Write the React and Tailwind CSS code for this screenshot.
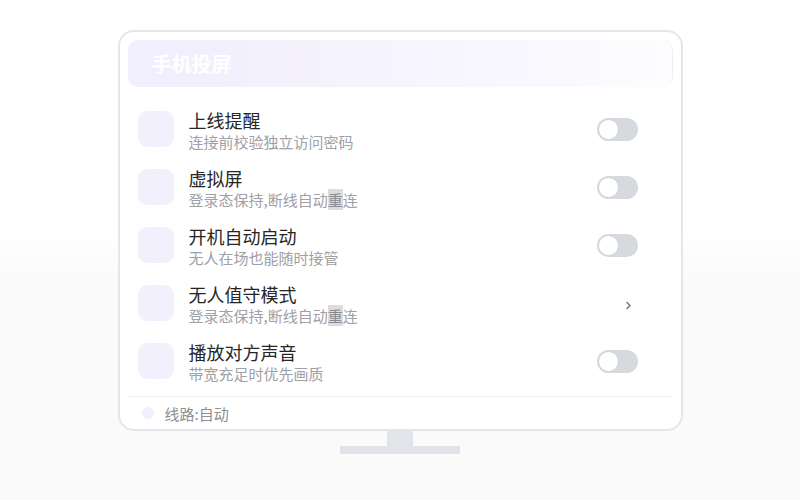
import React from "react";

const rows = [
  { title: "上线提醒", sub: "连接前校验独立访问密码", type: "toggle" },
  { title: "虚拟屏", sub: "登录态保持,断线自动|重|连", type: "toggle" },
  { title: "开机自动启动", sub: "无人在场也能随时接管", type: "toggle" },
  { title: "无人值守模式", sub: "登录态保持,断线自动|重|连", type: "chevron" },
  { title: "播放对方声音", sub: "带宽充足时优先画质", type: "toggle" },
];

function Sub({ text }) {
  const parts = text.split("|");
  if (parts.length === 1) return <>{text}</>;
  return (
    <>
      {parts[0]}
      <span className="bg-[#dcdcde] text-[#8a8a8e]">{parts[1]}</span>
      {parts[2]}
    </>
  );
}

function Toggle() {
  return (
    <div className="w-[41px] h-[23px] rounded-full bg-[#d6d9de] flex items-center pl-[1px]">
      <div className="w-[21px] h-[21px] rounded-full bg-white border border-[#d0d3d9]" />
    </div>
  );
}

export default function App() {
  return (
    <div
      className="w-[800px] h-[500px] flex flex-col items-center pt-[30px] bg-[linear-gradient(to_bottom,#ffffff_0%,#ffffff_46%,#fafafb_56%,#fafafb_100%)]"
      style={{ fontFamily: '"Noto Sans CJK SC", "Noto Sans", sans-serif' }}
    >
      <div className="w-[565px] h-[401px] border-2 border-[#e4e6ea] rounded-[16px] bg-white flex flex-col">
        <div className="mx-[8px] mt-[8px] h-[47px] rounded-[10px] bg-[linear-gradient(to_right,#f1eefd_0%,#f6f4fe_50%,#fbfbfe_90%,#fdfdff_100%)] border-r border-[#eceef2] flex items-center pl-[24px]">
          <span className="text-[20px] font-bold text-white leading-none mt-[1px]">手机投屏</span>
        </div>
        <div className="mt-[13px] flex flex-col">
          {rows.map((r, i) => (
            <div key={i} className="h-[58px] flex items-center pl-[18px] pr-[43px]">
              <div className="w-[36px] h-[36px] rounded-[9px] bg-[#f3f0fd] shrink-0" />
              <div className="ml-[15px] flex-1 flex flex-col pt-[2px]">
                <div className="text-[18px] leading-[22px] text-[#262626]">{r.title}</div>
                <div className="text-[15px] leading-[20px] text-[#a0a0a6] mt-[1px]">
                  <Sub text={r.sub} />
                </div>
              </div>
              {r.type === "toggle" ? (
                <Toggle />
              ) : (
                <svg width="41" height="23" viewBox="0 0 41 23" className="shrink-0 mt-[4px]">
                  <path d="M30 8.5 L33 11.5 L30 14.5" fill="none" stroke="#6b7280" strokeWidth="1.4" strokeLinecap="round" strokeLinejoin="round" />
                </svg>
              )}
            </div>
          ))}
        </div>
        <div className="mx-[9px] mt-[6px] h-px bg-[#eef0f3]" />
        <div className="flex-1 flex items-center pl-[22px]">
          <div className="w-[12px] h-[12px] rounded-full bg-[#f1eefd]" />
          <span className="ml-[11px] text-[15px] text-[#8e8e93] leading-none">线路:自动</span>
        </div>
      </div>
      <div className="w-[26px] h-[15px] bg-[#e1e4e8]" />
      <div className="w-[120px] h-[8px] bg-[#e1e4e8]" />
    </div>
  );
}
